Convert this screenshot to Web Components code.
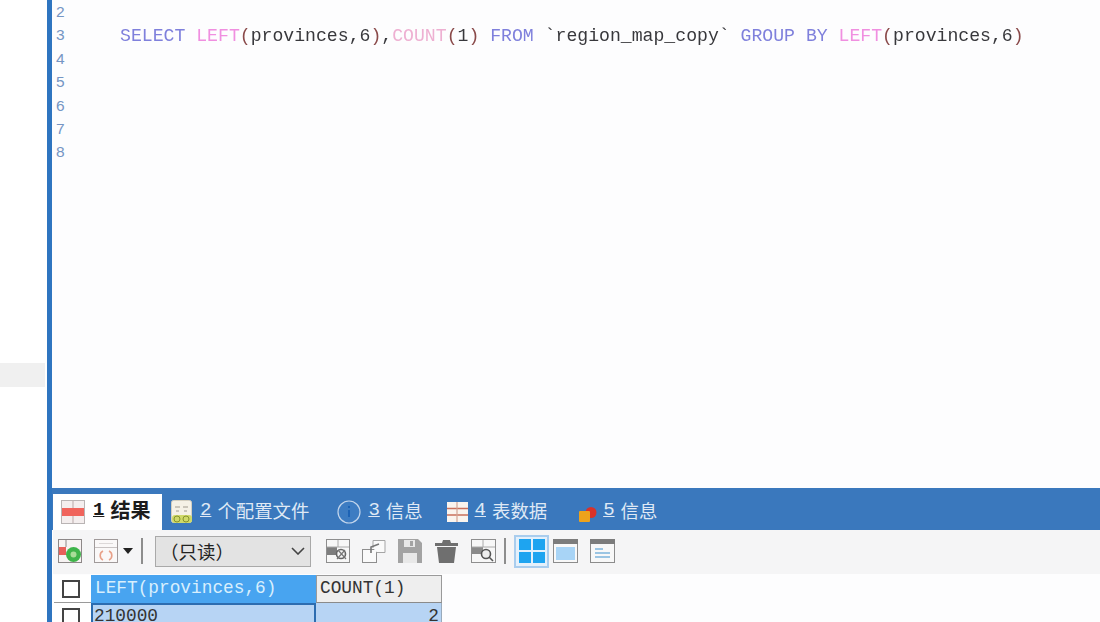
<!DOCTYPE html>
<html lang="zh">
<head>
<meta charset="utf-8">
<title>SQL result</title>
<style>
  html, body { margin: 0; height: 100%; overflow: hidden; background: #fff; }
</style>
</head>
<body>
<query-window>
  <sql-editor slot="editor"></sql-editor>
  <result-tabs slot="tabs">
    <result-tab active icon="grid-red" num="1" label="结果"></result-tab>
    <result-tab icon="profile" num="2" label="个配置文件" style="margin-left:9px"></result-tab>
    <result-tab icon="info" num="3" label="信息" style="margin-left:28px"></result-tab>
    <result-tab icon="table" num="4" label="表数据" style="margin-left:24px"></result-tab>
    <result-tab icon="spot" num="5" label="信息" style="margin-left:30px"></result-tab>
  </result-tabs>
  <result-toolbar slot="toolbar"></result-toolbar>
  <result-grid slot="grid"></result-grid>
</query-window>

<script>
// icon set shared by the tabs and the toolbar
const ICONS = {
  'grid-red': `<svg width="24" height="24" viewBox="0 0 24 24"><rect x="0.5" y="0.5" width="23" height="23" fill="#f4eeee" stroke="#b9b4b4"/><rect x="1" y="8" width="22" height="8" fill="#f0645c"/><path d="M12 1v7M12 16v7" stroke="#b9a9a9"/></svg>`,
  'profile': `<svg width="22" height="24" viewBox="0 0 22 24"><rect x="0.5" y="0.5" width="20" height="22" rx="2" fill="#f5f1e6" stroke="#d4cfc0"/><path d="M4 7h5M12 7h5M5 11h3M13 11h3" stroke="#a09a8e"/><rect x="1" y="15" width="20" height="8" rx="3" fill="#cfd968"/><circle cx="6" cy="19" r="3" fill="none" stroke="#86932f"/><circle cx="15" cy="19" r="3" fill="none" stroke="#86932f"/></svg>`,
  'info': `<svg width="24" height="24" viewBox="0 0 24 24"><circle cx="12" cy="12" r="11" fill="#3d7cc2" stroke="#c3d6ec" stroke-width="1.2"/><rect x="11" y="10" width="2" height="7" fill="#1d63b5"/><rect x="11" y="6" width="2" height="2" fill="#1d63b5"/></svg>`,
  'table': `<svg width="21" height="20" viewBox="0 0 21 20"><rect width="21" height="20" fill="#faf4ee"/><path d="M0 6.5h21M0 13h21" stroke="#c9705c" stroke-width="1.4"/><path d="M10 0v20" stroke="#d2a494" stroke-width="1.2"/></svg>`,
  'spot': `<svg width="18" height="18" viewBox="0 0 18 18"><circle cx="12" cy="6.5" r="5.5" fill="#d8322a"/><rect x="0" y="5" width="11" height="11" rx="1" fill="#eda21c"/></svg>`,
  'run': `<svg width="24" height="24" viewBox="0 0 24 24"><rect x="0.5" y="0.5" width="23" height="23" fill="#f7f3f3" stroke="#8d8888"/><path d="M1 8h7v8H1z" fill="#e8605a"/><path d="M8 1v7" stroke="#8d8888"/><circle cx="15.5" cy="15.5" r="7.5" fill="#3fb44a"/><circle cx="15.5" cy="15.5" r="3" fill="#a8dd98"/></svg>`,
  'refresh': `<svg width="24" height="24" viewBox="0 0 24 24"><rect x="0.5" y="0.5" width="23" height="23" fill="#faf8f8" stroke="#a09a9a"/><path d="M1 8.5h22" stroke="#c7c2c2"/><path d="M5 4.5h14" stroke="#dcd8d8"/><path d="M9 12a5 5 0 0 0 0 9M15 12a5 5 0 0 1 0 9" fill="none" stroke="#e8a088" stroke-width="1.6"/></svg>`,
  'filter': `<svg width="24" height="24" viewBox="0 0 24 24"><rect x="0.5" y="0.5" width="23" height="23" fill="#f7f7f7" stroke="#8e8e8e"/><rect x="1" y="8" width="10" height="8" fill="#7e7e7e"/><path d="M12 1v7M1 8h22" stroke="#aaa"/><circle cx="15" cy="15" r="4.5" fill="none" stroke="#666" stroke-width="1.6"/><path d="M11 20l8-9M12 11l8 9" stroke="#777" stroke-width="1.2"/></svg>`,
  'copy': `<svg width="24" height="24" viewBox="0 0 24 24"><rect x="0.5" y="10.5" width="14" height="13" fill="#fafafa" stroke="#8e8e8e"/><path d="M11 9V1.5h12v12h-8" fill="#fafafa" stroke="#a5a5a5"/><path d="M17 5l-8 3v6" fill="none" stroke="#777" stroke-width="1.6"/></svg>`,
  'save': `<svg width="24" height="24" viewBox="0 0 24 24"><path d="M0 0h20l4 4v20H0z" fill="#a3a3a3"/><rect x="6" y="1" width="11" height="7" fill="#e8e8e8"/><rect x="12" y="2" width="3" height="5" fill="#a3a3a3"/><rect x="5" y="14" width="14" height="10" fill="#e8e8e8"/></svg>`,
  'trash': `<svg width="25" height="24" viewBox="0 0 25 24"><path d="M9 1h7l1 3h7v3H1V4h7z" fill="#6f6f6f"/><path d="M3 8h19l-2 16H5z" fill="#6f6f6f"/></svg>`,
  'find': `<svg width="25" height="24" viewBox="0 0 25 24"><rect x="0.5" y="0.5" width="24" height="23" fill="#f7f7f7" stroke="#8e8e8e"/><rect x="1" y="8" width="11" height="7" fill="#8a8a8a"/><path d="M12 1v7M1 8h23" stroke="#aaa"/><circle cx="15" cy="15" r="4.5" fill="#eee" stroke="#555" stroke-width="1.6"/><path d="M18 18l4 4" stroke="#555" stroke-width="1.6"/></svg>`,
  'view-grid': `<svg width="26" height="24" viewBox="0 0 26 24"><path d="M0 0h12v11H0zM14 0h12v11H14zM0 13h12v11H0zM14 13h12v11H14z" fill="#1ea4f0"/></svg>`,
  'view-form': `<svg width="25" height="24" viewBox="0 0 25 24"><rect x="0.5" y="0.5" width="24" height="23" fill="#f8f8f8" stroke="#8c8c8c"/><rect width="25" height="5" fill="#7c7c7c"/><rect x="3" y="8" width="19" height="13" fill="#a8d4f6"/></svg>`,
  'view-text': `<svg width="25" height="24" viewBox="0 0 25 24"><rect x="0.5" y="0.5" width="24" height="23" fill="#f8f8f8" stroke="#8c8c8c"/><rect width="25" height="5" fill="#7c7c7c"/><path d="M5 10h8M5 14h15M5 18h15" stroke="#7cb4dc" stroke-width="1.6"/></svg>`
};

class ToolIcon extends HTMLElement {
  connectedCallback() {
    this.attachShadow({ mode: 'open' });
    this.shadowRoot.innerHTML = `
      <style>
        :host { display: inline-flex; flex-shrink: 0; line-height: 0; filter: blur(0.4px); }
      </style>
      ${ICONS[this.getAttribute('name')] || ''}
    `;
  }
}

class QueryWindow extends HTMLElement {
  constructor() {
    super();
    this.attachShadow({ mode: 'open' });
    this.shadowRoot.innerHTML = `
      <style>
        :host { display: flex; height: 622px; width: 1100px; overflow: hidden; }
        .rail { width: 47px; flex-shrink: 0; background: #fff; padding-top: 363px; box-sizing: border-box; }
        .rail-band { height: 24px; margin-right: 2px; background: #f0f0f0; }
        .accent { width: 5px; flex-shrink: 0; background: #2f75c0; }
        .main { flex: 1; min-width: 0; display: flex; flex-direction: column; }
      </style>
      <div class="rail"><div class="rail-band"></div></div>
      <div class="accent"></div>
      <div class="main">
        <slot name="editor"></slot>
        <slot name="tabs"></slot>
        <slot name="toolbar"></slot>
        <slot name="grid"></slot>
      </div>
    `;
  }
}

class SqlEditor extends HTMLElement {
  constructor() {
    super();
    this.attachShadow({ mode: 'open' });
    const rows = [2, 3, 4, 5, 6, 7, 8].map(n => `
      <div class="row">
        <span class="num">${n}</span>
        <span class="code">${n === 3 ? this._sql() : ''}</span>
      </div>`).join('');
    this.shadowRoot.innerHTML = `
      <style>
        :host { display: block; height: 488px; background: #fdfdfe; overflow: hidden; }
        .row { display: flex; height: 23.4px; line-height: 23.4px; }
        .num { width: 68px; padding-left: 4px; box-sizing: border-box; flex-shrink: 0;
               font: 15.5px/23.4px "Liberation Sans", sans-serif; color: #7595c4; }
        .code { padding-top: 2px; font: 18.15px/23.4px "Liberation Mono", monospace; color: #38383c;
                white-space: pre; filter: blur(0.4px); }
        .kw { color: #7f80dc; }
        .fn { color: #f08fe0; }
        .fn2 { color: #eeb0d2; }
        .p { color: #8a4a4a; }
      </style>
      ${rows}
    `;
  }

  _sql() {
    const left = '<span class="fn">LEFT</span><span class="p">(</span>provinces,6<span class="p">)</span>';
    return `<span class="kw">SELECT</span> ${left},<span class="fn2">COUNT</span><span class="p">(</span>1<span class="p">)</span> `
      + '<span class="kw">FROM</span> `region_map_copy` '
      + `<span class="kw">GROUP BY</span> ${left}`;
  }
}

class ResultTabs extends HTMLElement {
  constructor() {
    super();
    this.attachShadow({ mode: 'open' });
    this.shadowRoot.innerHTML = `
      <style>
        :host { display: flex; height: 42px; box-sizing: border-box; padding: 6px 0 0 1px;
                background: #3a78bd; flex-shrink: 0; }
      </style>
      <slot></slot>
    `;
  }
}

class ResultTab extends HTMLElement {
  connectedCallback() {
    this.attachShadow({ mode: 'open' });
    const num = this.getAttribute('num');
    const label = this.getAttribute('label');
    const icon = this.getAttribute('icon');
    this.shadowRoot.innerHTML = `
      <style>
        :host { display: flex; align-items: center; gap: 7px; height: 36px; color: #dfe9f5;
                font: 18.4px/36px "Noto Sans CJK SC", "Liberation Sans", sans-serif; white-space: nowrap; }
        :host([active]) { width: 109px; box-sizing: border-box; padding-left: 8px; gap: 8px; background: #fff;
                          color: #1c1c1c; font-weight: 700; font-size: 20px; }
        .text { display: flex; gap: 6px; margin-top: -4px; }
        u { font-family: "Liberation Mono", monospace; font-size: 19px; }
        .spot { margin-top: 6px; margin-left: 2px; margin-right: -1px; }
      </style>
      <tool-icon class="${icon === 'spot' ? 'spot' : ''}" name="${icon}"></tool-icon>
      <span class="text"><u>${num}</u><span>${label}</span></span>
    `;
  }
}

class ResultToolbar extends HTMLElement {
  constructor() {
    super();
    this.attachShadow({ mode: 'open' });
    this.shadowRoot.innerHTML = `
      <style>
        :host { display: flex; align-items: center; height: 44px; flex-shrink: 0; box-sizing: border-box;
                margin-left: 1px; padding: 0 0 2px 5px; background: #f5f5f6; }
        .group { display: flex; align-items: center; gap: 12px; }
        .arrow { width: 0; height: 0; margin-left: 5px; border: 5.5px solid transparent;
                 border-top: 6px solid #222; border-bottom: 0; }
        .sep { width: 2px; height: 26px; background: #8d8d8d; }
        .drop { display: flex; align-items: center; justify-content: space-between; box-sizing: border-box;
                width: 156px; height: 31px; margin: 0 15px 0 12px; padding: 0 5px 0 4px;
                background: #e3e3e3; border: 1px solid #a9a9a9; color: #222; text-spacing-trim: space-all;
                font: 18.5px/29px "Noto Sans CJK SC", "Liberation Sans", sans-serif; }
        .active { display: flex; align-items: center; justify-content: center; box-sizing: border-box;
                  width: 35px; height: 33px; margin: 0 4px 0 8px; background: #e4f0fb; border: 2px solid #a9cdee; }
      </style>
      <div class="group"><tool-icon name="run"></tool-icon><tool-icon name="refresh"></tool-icon></div>
      <span class="arrow"></span>
      <span class="sep" style="margin-left:8px"></span>
      <div class="drop">
        <span>（只读）</span>
        <svg width="14" height="8" viewBox="0 0 14 8"><path d="M1 1l6 6 6-6" fill="none" stroke="#444" stroke-width="1.6"/></svg>
      </div>
      <div class="group">
        <tool-icon name="filter"></tool-icon>
        <tool-icon name="copy"></tool-icon>
        <tool-icon name="save"></tool-icon>
        <tool-icon name="trash"></tool-icon>
        <tool-icon name="find"></tool-icon>
      </div>
      <span class="sep" style="margin-left:8px"></span>
      <div class="active"><tool-icon name="view-grid"></tool-icon></div>
      <tool-icon name="view-form"></tool-icon>
      <tool-icon name="view-text" style="margin-left:12px"></tool-icon>
    `;
  }
}

class ResultGrid extends HTMLElement {
  constructor() {
    super();
    this.attachShadow({ mode: 'open' });
    this.shadowRoot.innerHTML = `
      <style>
        :host { display: grid; grid-template-columns: 37px 225px 126px; grid-template-rows: 28px 19px;
                height: 48px; box-sizing: border-box; padding-top: 1px; margin-left: 2px;
                background: #fdfdfe; overflow: hidden;
                font: 17.8px/1 "Liberation Mono", monospace; color: #333; }
        .cell { box-sizing: border-box; display: flex; align-items: center; padding-left: 4px; white-space: nowrap; }
        .check { justify-content: center; padding: 0 3px 0 0; background: #fff; border-bottom: 1px solid #9a9a9a; }
        .box { width: 18px; height: 18px; box-sizing: border-box; border: 2px solid #444; background: #fff; flex-shrink: 0; }
        .head-a { background: #48a4f0; color: #d8effd; }
        .head-b { background: #eeeeee; border: 1px solid #9a9a9a; border-bottom-color: #8a8a8a; padding-left: 3px; }
        .sel { background: #b7d4f4; border: 2px solid #2c6cb0; border-bottom: 0; padding: 5.8px 0 0 1px;
               align-items: flex-start; line-height: 11px; }
        .val { background: #b7d4f4; justify-content: flex-end; padding: 7.8px 2px 0 0; align-items: flex-start;
               border-right: 1px solid #9ab; line-height: 11px; }
      </style>
      <div class="cell check"><span class="box"></span></div>
      <div class="cell head-a">LEFT(provinces,6)</div>
      <div class="cell head-b">COUNT(1)</div>
      <div class="cell check" style="align-items:flex-start;padding-top:5px;border-bottom:0"><span class="box"></span></div>
      <div class="cell sel">210000</div>
      <div class="cell val">2</div>
    `;
  }
}

customElements.define('tool-icon', ToolIcon);
customElements.define('query-window', QueryWindow);
customElements.define('sql-editor', SqlEditor);
customElements.define('result-tabs', ResultTabs);
customElements.define('result-tab', ResultTab);
customElements.define('result-toolbar', ResultToolbar);
customElements.define('result-grid', ResultGrid);
</script>
</body>
</html>
